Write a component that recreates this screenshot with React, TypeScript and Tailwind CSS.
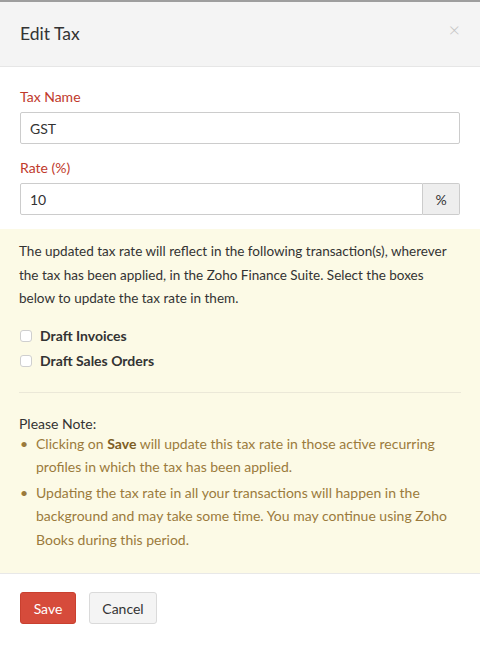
export default function App() {
  return (
    <div className="w-[480px] h-[645px] bg-white border-t-2 border-[#9e9e9e] font-['Lato',sans-serif] text-[14px] text-[#333]">
      <div className="h-[65px] bg-[#f4f4f4] border-b border-[#e6e6e6] flex items-center justify-between pl-5 pr-[20px]">
        <h1 className="text-[17.5px] text-[#333] pt-[1px]">Edit Tax</h1>
        <span className="text-[20px] leading-none text-[#c4c4c4] -mt-[10px] font-light">&times;</span>
      </div>

      <div className="px-5 pt-[20px] pb-[14px]">
        <label className="block text-[#c0392b] leading-[20px] mb-[5px]">Tax Name</label>
        <input
          defaultValue="GST"
          className="w-full h-[32px] border border-[#ccc] rounded-[2px] px-[9px] text-[#333] outline-none"
        />
        <label className="block text-[#c0392b] leading-[20px] mt-[14px] mb-[5px]">Rate (%)</label>
        <div className="flex h-[32px]">
          <input
            defaultValue="10"
            className="flex-1 min-w-0 border border-[#ccc] rounded-l-[2px] px-[9px] text-[#333] outline-none"
          />
          <span className="w-[37px] flex items-center justify-center bg-[#eee] border border-l-0 border-[#ccc] rounded-r-[2px]">%</span>
        </div>
      </div>

      <div className="bg-[#fcfae6] px-[19px] pt-[11px] pb-[22px]">
        <p className="text-[13.5px] leading-[23.5px] text-[#333]">
          The updated tax rate will reflect in the following transaction(s), wherever the tax has been applied, in the Zoho Finance Suite. Select the boxes below to update the tax rate in them.
        </p>
        <div className="mt-[16px] flex flex-col gap-[7px]">
          {['Draft Invoices', 'Draft Sales Orders'].map((t) => (
            <label key={t} className="flex items-center gap-[8px] leading-[18px]">
              <span className="w-[12px] h-[12px] ml-[1px] rounded-[3px] border border-[#cfcfcf] bg-white" />
              <span className="font-bold text-[#333]">{t}</span>
            </label>
          ))}
        </div>
        <div className="mt-[22px] border-t border-[#ebe8d8]" />
        <p className="mt-[21px] leading-[20px] text-[#333]">Please Note:</p>
        <ul className="text-[#9b7a3c] leading-[23.5px] -mt-[2px]">
          <li className="flex">
            <span className="w-[17px] pl-[1px]">&bull;</span>
            <span className="flex-1">
              Clicking on <b className="text-[#7d5e25]">Save</b> will update this tax rate in those active recurring profiles in which the tax has been applied.
            </span>
          </li>
          <li className="flex mt-[2px]">
            <span className="w-[17px] pl-[1px]">&bull;</span>
            <span className="flex-1">
              Updating the tax rate in all your transactions will happen in the background and may take some time. You may continue using Zoho Books during this period.
            </span>
          </li>
        </ul>
      </div>

      <div className="border-t border-[#e8e8e8] px-5 pt-[18px] flex gap-[13px]">
        <button className="h-[32px] w-[56px] rounded-[3px] bg-[#d64b3b] text-white border border-[#c9402f]">Save</button>
        <button className="h-[32px] w-[68px] rounded-[3px] bg-[#f4f4f4] text-[#333] border border-[#dadada]">Cancel</button>
      </div>
    </div>
  )
}
